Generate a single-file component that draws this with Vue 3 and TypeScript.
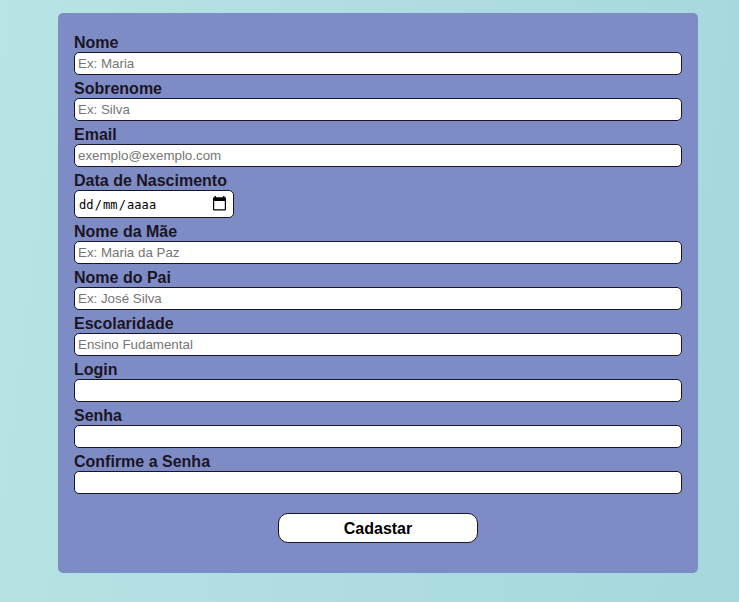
<script setup lang="ts">
interface Field {
  id: string
  label: string
  type: 'text' | 'email' | 'password' | 'date'
  placeholder?: string
}

const fields: Field[] = [
  { id: 'nome', label: 'Nome', type: 'text', placeholder: 'Ex: Maria' },
  { id: 'sobrenome', label: 'Sobrenome', type: 'text', placeholder: 'Ex: Silva' },
  { id: 'email', label: 'Email', type: 'email', placeholder: 'exemplo@exemplo.com' },
  { id: 'nascimento', label: 'Data de Nascimento', type: 'date' },
  { id: 'mae', label: 'Nome da Mãe', type: 'text', placeholder: 'Ex: Maria da Paz' },
  { id: 'pai', label: 'Nome do Pai', type: 'text', placeholder: 'Ex: José Silva' },
  { id: 'escolaridade', label: 'Escolaridade', type: 'text', placeholder: 'Ensino Fudamental' },
  { id: 'login', label: 'Login', type: 'text' },
  { id: 'senha', label: 'Senha', type: 'password' },
  { id: 'confirma', label: 'Confirme a Senha', type: 'password' },
]
</script>

<template>
  <main class="page">
    <form class="card" @submit.prevent>
      <div v-for="field in fields" :key="field.id" class="field">
        <label class="label" :for="field.id">{{ field.label }}</label>
        <div v-if="field.type === 'date'" :id="field.id" class="date" tabindex="0">
          <span class="date-text"><span>dd</span><span class="slash">/</span><span>mm</span><span class="slash">/</span><span>aaaa</span></span>
          <svg class="calendar" width="13" height="16" viewBox="0 0 13 16" aria-hidden="true">
            <path d="M1.5 0h1.4v1.2h7.2V0h1.4v1.2H12a1 1 0 0 1 1 1v11.3a1 1 0 0 1-1 1H1a1 1 0 0 1-1-1V2.2a1 1 0 0 1 1-1h.5zM1.2 5v8.2h10.6V5z" fill="#000" fill-rule="evenodd" />
          </svg>
        </div>
        <input v-else :id="field.id" class="input" :type="field.type" :placeholder="field.placeholder" />
      </div>
      <button class="submit" type="submit">Cadastar</button>
    </form>
  </main>
</template>

<style>
body {
  margin: 0;
}
</style>

<style scoped>
.page {
  box-sizing: border-box;
  height: 602px;
  padding: 13px 41px 0 58px;
  background: linear-gradient(97deg, #b7e4e5, #a5d7dc);
  font-family: "Liberation Sans", Arial, sans-serif;
}

.card {
  box-sizing: border-box;
  display: flex;
  flex-direction: column;
  gap: 5px;
  width: 640px;
  height: 560px;
  padding: 21px 16px 0;
  border-radius: 5px;
  background: #7e8cc6;
}

.field {
  display: flex;
  flex-direction: column;
}

.label {
  height: 18px;
  color: #1b1523;
  font-size: 16px;
  font-weight: bold;
  line-height: 18px;
}

.input,
.date {
  box-sizing: border-box;
  border: 1px solid #1b1523;
  border-radius: 5px;
  background: #fff;
}

.input {
  width: 100%;
  height: 23px;
  margin: 0;
  padding: 1px 3px;
  font-family: inherit;
  font-size: 13.333px;
}

.input::placeholder {
  color: #757575;
}

.date {
  display: flex;
  align-items: center;
  justify-content: space-between;
  width: 160px;
  height: 28px;
  padding: 0 7px 0 4px;
}

.date-text {
  padding-top: 2px;
  color: #000;
  font-family: "DejaVu Sans Mono", monospace;
  font-size: 12px;
  line-height: 16px;
  letter-spacing: 0.1px;
}

.slash {
  padding: 0 1px;
}

.submit {
  box-sizing: border-box;
  align-self: center;
  width: 200px;
  height: 30px;
  margin: 14px 0 0;
  padding: 2px 0 0;
  border: 1px solid #1b1523;
  border-radius: 10px;
  background: #fff;
  color: #000;
  font-family: inherit;
  font-size: 16px;
  font-weight: bold;
}
</style>
